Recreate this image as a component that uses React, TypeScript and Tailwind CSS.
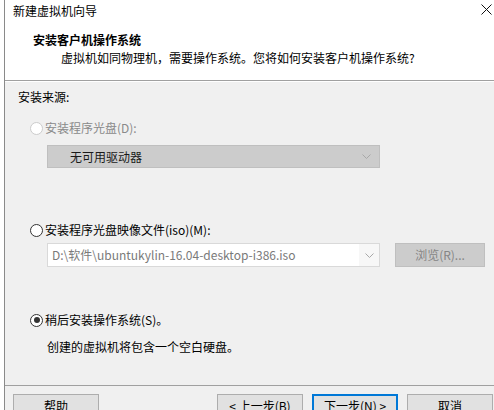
import React from 'react'

const FONT = '"Noto Sans CJK SC", "Noto Sans", sans-serif'

function Radio({ checked = false, disabled = false }: { checked?: boolean; disabled?: boolean }): React.JSX.Element {
  return (
    <span
      className={`flex h-[13px] w-[13px] shrink-0 items-center justify-center rounded-full border bg-white ${
        disabled ? 'border-[#cccccc]' : 'border-[#333333]'
      }`}
    >
      {checked && <span className="h-[6px] w-[6px] rounded-full bg-[#333333]" />}
    </span>
  )
}

function Chevron(): React.JSX.Element {
  return (
    <svg width="9" height="5" viewBox="0 0 9 5" className="shrink-0">
      <path d="M0.5 0.5 L4.5 4.5 L8.5 0.5" fill="none" stroke="#a8a8a8" strokeWidth="1" />
    </svg>
  )
}

function Button({ label, primary = false }: { label: string; primary?: boolean }): React.JSX.Element {
  return (
    <div
      className={`flex h-[23px] w-[86px] items-center justify-center bg-[#e1e1e1] text-[12px] text-black ${
        primary ? 'border-2 border-[#0078d7]' : 'border border-[#adadad]'
      }`}
    >
      {label}
    </div>
  )
}

export default function App(): React.JSX.Element {
  return (
    <div className="flex h-[410px] w-[494px] overflow-hidden bg-white text-[12px] text-black" style={{ fontFamily: FONT }}>
      <div className="w-[4px] shrink-0 bg-white" />
      <div className="flex min-w-0 flex-1 flex-col border-l border-[#8a8a8a] bg-[#f0f0f0]">
        {/* title bar */}
        <div className="flex h-[22px] shrink-0 items-center justify-between bg-white pl-[8px] pr-[2px]">
          <span className="leading-[18px]">新建虚拟机向导</span>
          <svg width="11" height="11" viewBox="0 0 11 11" className="mb-[3px]">
            <path d="M0.5 0.5 L10.5 10.5 M10.5 0.5 L0.5 10.5" stroke="#111" strokeWidth="1" />
          </svg>
        </div>

        {/* header */}
        <div className="h-[59px] shrink-0 border-b border-[#a0a0a0] bg-white pt-[9px]">
          <div className="pl-[28px] font-bold leading-[18px]">安装客户机操作系统</div>
          <div className="pl-[56px] leading-[18px]">虚拟机如同物理机，需要操作系统。您将如何安装客户机操作系统?</div>
        </div>

        {/* body */}
        <div className="flex h-[304px] shrink-0 flex-col border-t border-white pl-[13px] pt-[6px]">
          <div className="leading-[18px]">安装来源:</div>

          <div className="mt-[13px] flex h-[18px] items-center gap-[2px] pl-[12px] text-[#8a8a8a]">
            <Radio disabled />
            <span>安装程序光盘(D):</span>
          </div>
          <div className="ml-[29px] mt-[8px] flex h-[23px] w-[333px] items-center justify-between border border-[#bfbfbf] bg-[#cccccc] pl-[22px] pr-[8px] text-[#1a1a1a]">
            <span>无可用驱动器</span>
            <Chevron />
          </div>

          <div className="mt-[53px] flex h-[18px] items-center gap-[2px] pl-[12px]">
            <Radio />
            <span>安装程序光盘映像文件(iso)(M):</span>
          </div>
          <div className="mt-[4px] flex items-center gap-[15px] pl-[29px]">
            <div className="flex h-[24px] w-[333px] items-center border border-[#d9d9d9] bg-white">
              <span className="flex-1 pl-[4px] text-[#7a7a7a]">D:\软件\ubuntukylin-16.04-desktop-i386.iso</span>
              <span className="flex h-full w-[20px] items-center justify-center bg-[#f7f7f7]">
                <Chevron />
              </span>
            </div>
            <div className="flex h-[24px] w-[90px] items-center justify-center border border-[#bfbfbf] bg-[#cccccc] text-[#858585]">
              浏览(R)...
            </div>
          </div>

          <div className="mt-[44px] flex h-[18px] items-center gap-[2px] pl-[12px]">
            <Radio checked />
            <span>稍后安装操作系统(S)。</span>
          </div>
          <div className="mt-[9px] pl-[29px] leading-[18px]">创建的虚拟机将包含一个空白硬盘。</div>
        </div>

        {/* footer */}
        <div className="flex flex-1 items-start border-t border-[#a0a0a0] pl-[8px] pt-[8px]">
          <Button label="帮助" />
          <div className="ml-auto flex gap-[9px] pr-[1px]">
            <Button label="< 上一步(B)" />
            <Button label="下一步(N) >" primary />
            <Button label="取消" />
          </div>
        </div>
      </div>
    </div>
  )
}
